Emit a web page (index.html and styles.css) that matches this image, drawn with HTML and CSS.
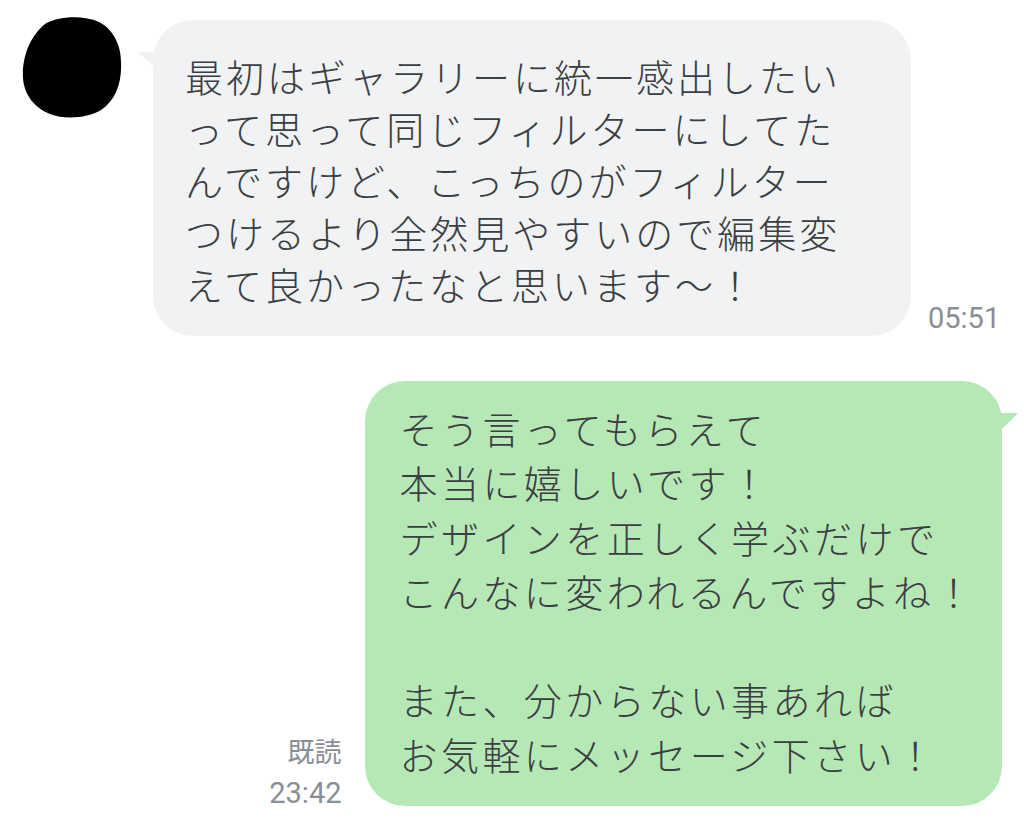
FILE: index.html
```html
<!DOCTYPE html>
<html lang="ja">
<head>
  <meta charset="UTF-8">
  <meta name="viewport" content="width=device-width, initial-scale=1.0">
  <title>トーク</title>
  <link rel="stylesheet" href="styles.css">
</head>
<body>

<div class="chat">
  <!-- Incoming message -->
  <div class="row row-in">
    <svg class="avatar" viewBox="22 17 101 102" width="101" height="102">
      <path d="M45 24 C56 17 82 14 99 22 C113 29 121 45 121 62 C122 82 116 100 101 110 C88 118 65 120 50 114 C35 108 24 95 23 78 C22 60 28 38 45 24 Z" fill="#000"/>
    </svg>
    <div class="bubble bubble-in">
      最初はギャラリーに統一感出したい<br>
      って思って同じフィルターにしてた<br>
      んですけど、こっちのがフィルター<br>
      つけるより全然見やすいので編集変<br>
      えて良かったなと思います〜！
    </div>
    <div class="meta meta-in">05:51</div>
  </div>

  <!-- Outgoing message -->
  <div class="row row-out">
    <div class="meta meta-out">
      <span class="read">既読</span>
      <span>23:42</span>
    </div>
    <div class="bubble bubble-out">
      そう言ってもらえて<br>
      本当に嬉しいです！<br>
      デザインを正しく学ぶだけで<br>
      こんなに変われるんですよね！<br>
      <br>
      また、分からない事あれば<br>
      お気軽にメッセージ下さい！
    </div>
  </div>
</div>

</body>
</html>
```

FILE: styles.css
```css
* {
  margin: 0;
  padding: 0;
  box-sizing: border-box;
}
body {
  background: #ffffff;
  font-family: "Noto Sans CJK JP", "Noto Sans", sans-serif;
  color: #3b3e42;
}
.chat {
  width: 1024px;
}
.row {
  display: flex;
}
.row-in {
  align-items: flex-end;
  padding: 17px 0 0 22px;
}
.row-out {
  justify-content: flex-end;
  align-items: flex-end;
  margin-top: 45px;
  padding-right: 22px;
}
.avatar {
  display: block;
  align-self: flex-start;
}
/* Speech bubbles */
.bubble {
  position: relative;
  font-size: 38px;
  font-weight: 300;
  letter-spacing: 3px;
  line-height: 52px;
  border-radius: 40px;
  white-space: nowrap;
}
.bubble-in {
  width: 758px;
  margin-left: 30px;
  margin-top: 3px;
  padding: 30px 20px 26px 32px;
  background: #f1f2f4;
}
.bubble-in::before {
  content: "";
  position: absolute;
  left: -16px;
  top: 32px;
  width: 24px;
  height: 20px;
  background: #f1f2f4;
  clip-path: polygon(0 0, 100% 0, 100% 100%);
}
.bubble-out {
  padding: 20px 26px 25px 34px;
  background: #b6e8b6;
  letter-spacing: 3.45px;
  line-height: 54.3px;
}
.bubble-out::before {
  content: "";
  position: absolute;
  right: -16px;
  top: 32px;
  width: 24px;
  height: 24px;
  background: #b6e8b6;
  clip-path: polygon(0 0, 100% 0, 0 100%);
}
/* Time and read marks */
.meta {
  font-family: Roboto, "Noto Sans CJK JP", sans-serif;
  font-size: 29px;
  color: #8a8e95;
  line-height: 40px;
}
.meta-in {
  margin-left: 17px;
  margin-bottom: -2px;
}
.meta-out {
  display: flex;
  flex-direction: column;
  align-items: flex-end;
  margin-right: 24px;
  margin-bottom: -7px;
}
.read {
  font-size: 27px;
}
```
